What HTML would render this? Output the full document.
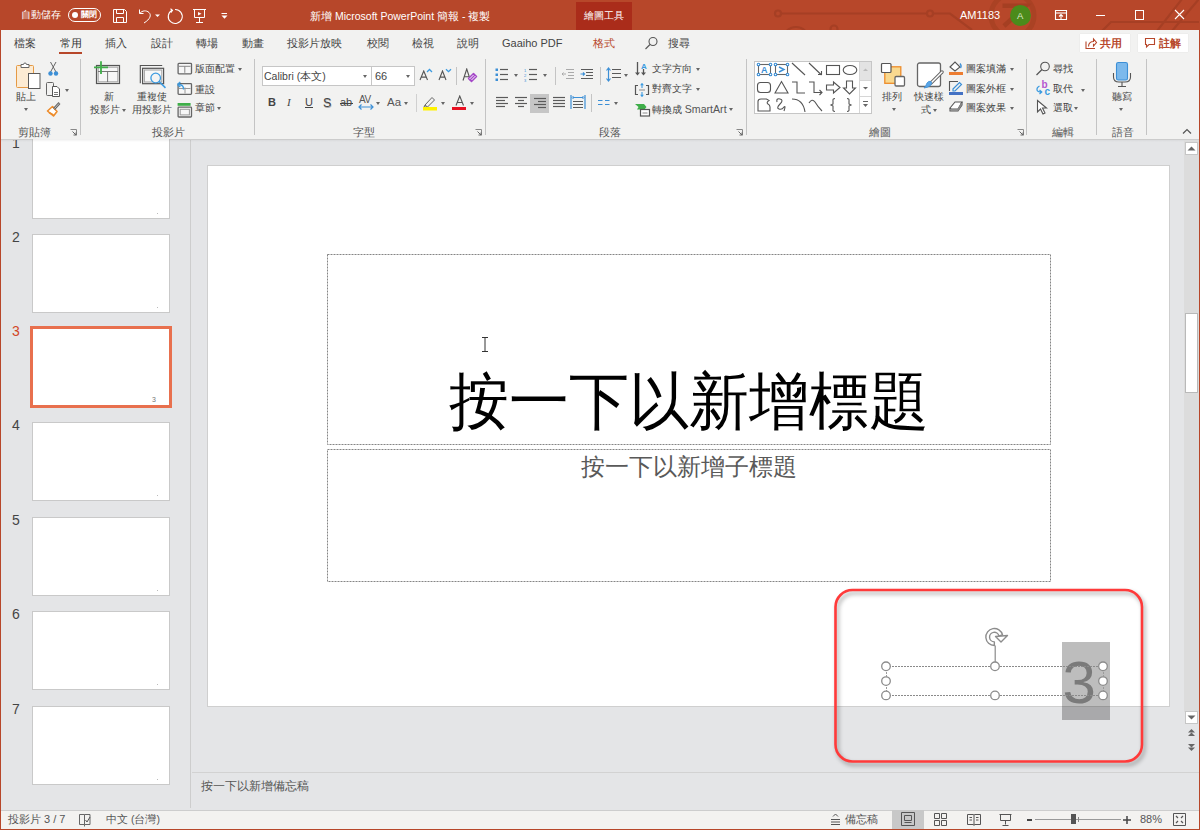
<!DOCTYPE html>
<html><head><meta charset="utf-8">
<style>
*{margin:0;padding:0;box-sizing:border-box}
html,body{width:1200px;height:830px;overflow:hidden;background:#E4E5E7;font-family:"Liberation Sans",sans-serif;color:#444}
.a{position:absolute}
.t{position:absolute;white-space:nowrap;line-height:1;font-size:10px;color:#444}
#title{left:0;top:0;width:1200px;height:30px;background:#B7472A}
#ribbon{left:0;top:30px;width:1200px;height:109px;background:#F2F2F1}
#rbot{left:0;top:139px;width:1200px;height:1px;background:#D9D9D9}
#pane{left:0;top:140px;width:190px;height:670px;background:#E4E5E7}
#split{left:190px;top:140px;width:1px;height:668px;background:#CDCDCD}
#slide{left:207px;top:165px;width:963px;height:541px;background:#fff;border:1px solid #D0D0D0}
#notesep{left:191px;top:771px;width:992px;height:1px;background:#D0D0D0}
#status{left:0;top:810px;width:1200px;height:20px;background:#F1F1F1;border-top:1px solid #D6D6D6}
#bl{left:0;top:0;width:1px;height:830px;background:#B7472A}
#br{left:1199px;top:0;width:1px;height:830px;background:#B7472A}
#bb{left:0;top:829px;width:1200px;height:1px;background:#B7472A}
.thumb{position:absolute;left:32px;width:138px;height:79px;background:#fff;border:1px solid #C9C9C9}
.num{position:absolute;left:12px;font-size:13px;color:#555}
.ph{position:absolute;border:1px dashed #8a8a8a}

.r{position:absolute;white-space:nowrap;line-height:1;font-size:10px;color:#444}
.dd{position:absolute;width:0;height:0;border-left:2.5px solid transparent;border-right:2.5px solid transparent;border-top:3px solid #666}
.sep{position:absolute;width:1px;background:#C4C4C4}
.lau{position:absolute;width:7px;height:6px}
</style></head><body>

<div id="title" class="a"></div>
<div id="ribbon" class="a"></div>
<div id="rbot" class="a"></div>
<div id="pane" class="a"></div>
<div id="split" class="a"></div>

<!-- title bar content -->
<svg class="a" style="left:0;top:0" width="1200" height="30">
 <g fill="none" stroke="#A63F24" stroke-width="2.2">
  <path d="M781 13.5H927"/><circle cx="778" cy="13.5" r="3"/><circle cx="930" cy="13.5" r="3"/>
  <path d="M933 13.5H950L972 30"/>
  <circle cx="796" cy="40" r="13"/><circle cx="834" cy="29" r="3.5"/>
  <circle cx="1012.5" cy="15.5" r="21.5" stroke-width="5" stroke="#AA4224"/>
  <path d="M1002.5 5.7H1026L1004 26" stroke-width="4.5" stroke="#A53F22"/>
  <path d="M1102 31L1111 22H1200M1157 31L1182 -1M1172 31L1199 -1"/>
 </g>
</svg>
<div class="t" style="left:21px;top:10px;color:#fff;font-size:10px">自動儲存</div>
<div class="a" style="left:68px;top:8px;width:33px;height:14px;border:1.3px solid #fff;border-radius:7px"></div>
<div class="a" style="left:71.5px;top:11.5px;width:6.5px;height:6.5px;border-radius:50%;background:#fff"></div>
<div class="t" style="left:80.5px;top:10.5px;color:#fff;font-size:7.5px;font-weight:bold">關閉</div>
<svg class="a" style="left:113px;top:9px" width="15" height="15" fill="none" stroke="#fff" stroke-width="1"><path d="M0.5 0.5H11.5L13.5 2.5V13.5H0.5Z"/><path d="M3.5 0.5V4.5H10.5V0.5"/><path d="M3.5 13.5V8.5H10.5V13.5"/></svg>
<svg class="a" style="left:138px;top:8px" width="24" height="16" fill="none" stroke="#fff" stroke-width="1"><path d="M1.5 1.5V5.5H5.5"/><path d="M1.8 5.3C4 2.5 8.5 2 11 4.5C13.5 7 12.5 11 6 15"/><path d="M17 6.5H22L19.5 9Z" fill="#fff" stroke="none"/></svg>
<svg class="a" style="left:166px;top:8px" width="18" height="17" fill="none" stroke="#fff" stroke-width="1.1"><path d="M6.2 2.2A7 7 0 1 0 9 1.5"/><path d="M4.5 0.8L6.5 2.3L4.8 4.6"/></svg>
<svg class="a" style="left:193px;top:9px" width="14" height="15" fill="none" stroke="#fff" stroke-width="1"><path d="M0 0.5H13"/><path d="M1.5 0.5V8.5H11.5V0.5"/><path d="M6.5 8.5V13.5M3 13.5H10"/><path d="M5 3L8.5 4.7L5 6.4Z" fill="#fff" stroke="none"/></svg>
<svg class="a" style="left:221px;top:13px" width="7" height="7"><path d="M0.5 0.5H6" stroke="#fff" stroke-width="1"/><path d="M0.5 2.5H6.5L3.5 5.8Z" fill="#fff"/></svg>
<div class="t" style="left:310px;top:11px;color:#fff;font-size:10.5px">新增 Microsoft PowerPoint 簡報 - 複製</div>
<div class="a" style="left:576px;top:2px;width:56px;height:28px;background:#AA2C1A"></div>
<div class="t" style="left:584px;top:11px;color:#fff;font-size:10.3px">繪圖工具</div>
<div class="t" style="left:960px;top:10px;color:#fff;font-size:11px">AM1183</div>
<div class="a" style="left:1010px;top:5px;width:21px;height:21px;border-radius:50%;background:#4B8B1B"></div>
<div class="t" style="left:1017px;top:11px;color:#DDE8CC;font-size:9.5px">A</div>
<svg class="a" style="left:1054px;top:9px" width="14" height="12" fill="none" stroke="#fff" stroke-width="1.1">
 <path d="M1.5 1.5H12.5V10.5H1.5Z"/><path d="M1.5 4H12.5"/><path d="M7 5.5V10M5 7.5L7 5.5L9 7.5"/>
</svg>
<div class="a" style="left:1096px;top:14.5px;width:9px;height:1px;background:#fff"></div>
<div class="a" style="left:1135px;top:10px;width:9px;height:9.5px;border:1.1px solid #fff"></div>
<svg class="a" style="left:1174px;top:9px" width="11" height="11" stroke="#fff" stroke-width="1.1"><path d="M1 1L10 10M10 1L1 10"/></svg>

<!-- tabs -->
<div class="t" style="left:14px;top:38px;font-size:11px">檔案</div>
<div class="t" style="left:60px;top:38px;font-size:11px;color:#333">常用</div>
<div class="a" style="left:59px;top:52px;width:23px;height:2px;background:#B7472A"></div>
<div class="t" style="left:105px;top:38px;font-size:11px">插入</div>
<div class="t" style="left:151px;top:38px;font-size:11px">設計</div>
<div class="t" style="left:196px;top:38px;font-size:11px">轉場</div>
<div class="t" style="left:242px;top:38px;font-size:11px">動畫</div>
<div class="t" style="left:287px;top:38px;font-size:11px">投影片放映</div>
<div class="t" style="left:367px;top:38px;font-size:11px">校閱</div>
<div class="t" style="left:412px;top:38px;font-size:11px">檢視</div>
<div class="t" style="left:457px;top:38px;font-size:11px">說明</div>
<div class="t" style="left:502px;top:38px;font-size:11px;font-size:11px">Gaaiho PDF</div>
<div class="t" style="left:593px;top:38px;font-size:11px;color:#B7472A">格式</div>
<svg class="a" style="left:644px;top:36px" width="15" height="14" fill="none" stroke="#555" stroke-width="1.1"><circle cx="9" cy="5.5" r="4"/><path d="M6 8.5L1.5 13"/></svg>
<div class="t" style="left:668px;top:38px;font-size:11px">搜尋</div>
<div class="a" style="left:1080px;top:34px;width:50px;height:18px;background:#fff;box-shadow:0 0 1px rgba(0,0,0,0.12)"></div>
<svg class="a" style="left:1085px;top:37px" width="13" height="13" fill="none" stroke="#B7472A" stroke-width="1.1"><path d="M1 4.5V11.5H10"/><path d="M3.5 9.5C3.5 6 6 4.5 8.5 4.5V2L11.5 5.5L8.5 9V6.8"/></svg>
<div class="t" style="left:1100px;top:38px;color:#B7472A;font-size:10.5px;font-weight:bold">共用</div>
<div class="a" style="left:1138px;top:34px;width:50px;height:18px;background:#fff;box-shadow:0 0 1px rgba(0,0,0,0.12)"></div>
<svg class="a" style="left:1144px;top:37px" width="12" height="12" fill="none" stroke="#B7472A" stroke-width="1.1"><path d="M1.5 1.5H10.5V7.5H5L2.5 10V7.5H1.5Z"/></svg>
<div class="t" style="left:1159px;top:38px;color:#B7472A;font-size:10.5px;font-weight:bold">註解</div>
<!-- ribbon -->
<div class="r" style="left:18px;top:127px;font-size:10.5px;color:#555">剪貼簿</div>
<div class="r" style="left:152px;top:127px;font-size:10.5px;color:#555">投影片</div>
<div class="r" style="left:353px;top:127px;font-size:10.5px;color:#555">字型</div>
<div class="r" style="left:599px;top:127px;font-size:10.5px;color:#555">段落</div>
<div class="r" style="left:869px;top:127px;font-size:10.5px;color:#555">繪圖</div>
<div class="r" style="left:1052px;top:127px;font-size:10.5px;color:#555">編輯</div>
<div class="r" style="left:1112px;top:127px;font-size:10.5px;color:#555">語音</div>
<svg class="a" style="left:70px;top:129px" width="8" height="8" fill="none" stroke="#5A5A5A" stroke-width="1" ><path d="M0.5 0.5H6.5V6.5" stroke="#888"/><path d="M2.5 2.5L6 6M3.5 6H6V3.5" stroke="#666"/></svg>
<svg class="a" style="left:475px;top:129px" width="8" height="8" fill="none" stroke="#5A5A5A" stroke-width="1" ><path d="M0.5 0.5H6.5V6.5" stroke="#888"/><path d="M2.5 2.5L6 6M3.5 6H6V3.5" stroke="#666"/></svg>
<svg class="a" style="left:736px;top:129px" width="8" height="8" fill="none" stroke="#5A5A5A" stroke-width="1" ><path d="M0.5 0.5H6.5V6.5" stroke="#888"/><path d="M2.5 2.5L6 6M3.5 6H6V3.5" stroke="#666"/></svg>
<svg class="a" style="left:1017px;top:129px" width="8" height="8" fill="none" stroke="#5A5A5A" stroke-width="1" ><path d="M0.5 0.5H6.5V6.5" stroke="#888"/><path d="M2.5 2.5L6 6M3.5 6H6V3.5" stroke="#666"/></svg>
<div class="sep" style="left:80px;top:59px;height:76px"></div>
<div class="sep" style="left:254px;top:59px;height:76px"></div>
<div class="sep" style="left:485px;top:59px;height:76px"></div>
<div class="sep" style="left:746px;top:59px;height:76px"></div>
<div class="sep" style="left:1026px;top:59px;height:76px"></div>
<div class="sep" style="left:1096px;top:59px;height:76px"></div>
<div class="sep" style="left:1146px;top:59px;height:76px"></div>
<svg class="a" style="left:15px;top:61px" width="27" height="29" fill="none" stroke="#5A5A5A" stroke-width="1" ><rect x="1.5" y="4.5" width="17" height="22" rx="1" fill="#FCEBD3" stroke="#E59A45"/>
<path d="M6 6.5V3.5H8.5A1.5 1.5 0 0 1 11.5 3.5H14V6.5Z" fill="#fff" stroke="#666"/>
<rect x="13.5" y="12.5" width="11.5" height="15" fill="#fff" stroke="#5A5A5A"/></svg>
<div class="r" style="left:16px;top:92px;font-size:10px;">貼上</div>
<div class="dd" style="left:24px;top:108px"></div>
<svg class="a" style="left:47px;top:61px" width="12" height="16" fill="none" stroke="#5A5A5A" stroke-width="1"><path d="M3.5 1L9 11M9 1L3.5 11" stroke="#666"/><circle cx="3.5" cy="12.5" r="2.2" fill="#3C8FD6" stroke="none"/><circle cx="9" cy="12.5" r="2.2" fill="#3C8FD6" stroke="none"/></svg>
<svg class="a" style="left:45px;top:81px" width="16" height="16" fill="none" stroke="#5A5A5A" stroke-width="1"><path d="M7 14.5H2.5Q1.5 14.5 1.5 13.5V2.5Q1.5 1.5 2.5 1.5H7.5Q8.5 1.5 8.5 2.5V5" stroke="#666"/><path d="M7.5 5.5H12L14.5 8V15.5H7.5Z" fill="#fff" stroke="#555"/><path d="M9 11.5H13M9 13.5H13" stroke="#777"/></svg>
<div class="dd" style="left:65px;top:89px"></div>
<svg class="a" style="left:46px;top:101px" width="15" height="17" fill="none" stroke="#5A5A5A" stroke-width="1"><path d="M1.5 10L6.5 5.5L11 10.5L7.5 15Z" fill="#fff" stroke="#ED8C2B" stroke-width="1.6" stroke-linejoin="round"/><path d="M3 11.5L7.5 14" stroke="#ED8C2B" stroke-width="1.5"/><path d="M8 8L13.5 2" stroke="#666" stroke-width="2.6"/><path d="M8.5 7.5L13 2.5" stroke="#ddd" stroke-width="0.8"/></svg>
<svg class="a" style="left:93px;top:60px" width="29" height="26" fill="none"><rect x="3.5" y="5.5" width="23" height="18" stroke="#555" stroke-width="1.2"/><rect x="5.2" y="7.2" width="19.6" height="14.6" fill="#F7F7F7" stroke="#A8A8A8" stroke-width="1.1"/><path d="M5 11.5H25M14.6 11.5V22" stroke="#777"/><path d="M1 7.3H15M8 1.3V13.9" stroke="#3FAE49" stroke-width="1.8"/></svg>
<div class="r" style="left:104px;top:92px;font-size:10px;">新</div>
<div class="r" style="left:90px;top:105px;font-size:10px;">投影片</div>
<div class="dd" style="left:122px;top:109px"></div>
<svg class="a" style="left:139px;top:64px" width="28" height="26" fill="none"><path d="M1.3 19.2V1.5H23.2" stroke="#555" stroke-width="1.1"/><rect x="3.6" y="4.3" width="21" height="15.4" fill="#F7F7F7" stroke="#555" stroke-width="1.2"/><rect x="5.4" y="6" width="17.4" height="12" stroke="#A8A8A8" stroke-width="1.1"/><circle cx="16.7" cy="14" r="4.8" fill="#F4F4F4" stroke="#3C9BE0" stroke-width="1.3"/><path d="M20.1 17.5L26.5 23.9" stroke="#3C9BE0" stroke-width="1.5"/></svg>
<div class="r" style="left:137px;top:92px;font-size:10px;">重複使</div>
<div class="r" style="left:132px;top:105px;font-size:10px;">用投影片</div>
<svg class="a" style="left:176px;top:61px" width="17" height="14" fill="none"><rect x="2.1" y="2.4" width="13.4" height="10.4" rx="0.8" fill="#F7F7F7" stroke="#666" stroke-width="1.3"/><path d="M3 5.3H14.5" stroke="#888" stroke-width="1"/><path d="M8.8 5.3V11.8" stroke="#888"/></svg>
<div class="r" style="left:195px;top:64px;font-size:10px;">版面配置</div>
<div class="dd" style="left:238px;top:68px"></div>
<svg class="a" style="left:176px;top:80px" width="17" height="16" fill="none"><rect x="2.1" y="3.7" width="13.4" height="10.6" rx="0.8" fill="#F7F7F7" stroke="#666" stroke-width="1.3"/><path d="M9 7.5V13.5M3 8.5H14.5" stroke="#999"/><path d="M7.5 9.5Q8 5 3 4.5" stroke="#3C9BE0" stroke-width="1.4"/><path d="M1.5 4.5L4.3 2M1.5 4.5L4.3 7" stroke="#3C9BE0" stroke-width="1.4"/></svg>
<div class="r" style="left:195px;top:85px;font-size:10px;">重設</div>
<svg class="a" style="left:176px;top:101px" width="17" height="17" fill="none"><rect x="1.6" y="2" width="13" height="2.8" fill="#3FAE49"/><rect x="2.1" y="6.2" width="13.4" height="9.8" rx="0.8" fill="#F7F7F7" stroke="#666" stroke-width="1.3"/><rect x="4.2" y="8.3" width="9.2" height="5.6" stroke="#999"/></svg>
<div class="r" style="left:195px;top:103px;font-size:10px;">章節</div>
<div class="dd" style="left:217px;top:107px"></div>
<div class="a" style="left:262px;top:66px;width:110px;height:20px;background:#fff;border:1px solid #C6C6C6"></div>
<div class="a" style="left:371px;top:66px;width:44px;height:20px;background:#fff;border:1px solid #C6C6C6"></div>
<div class="r" style="left:264px;top:71px;font-size:10.5px;color:#454545">Calibri (本文)</div>
<div class="dd" style="left:363px;top:75px"></div>
<div class="r" style="left:375px;top:71px;font-size:11px;color:#454545">66</div>
<div class="dd" style="left:406px;top:75px"></div>
<svg class="a" style="left:419px;top:70px" width="9.5" height="11" fill="none" stroke="#555" stroke-width="1.1"><path d="M1 10L4.75 1L8.5 10M2.5 7.12H7.0"/></svg>
<svg class="a" style="left:426px;top:68px" width="7" height="5" fill="none"><path d="M1 4L3.5 1.5L6 4" stroke="#3C9BE0" stroke-width="1.3"/></svg>
<svg class="a" style="left:438px;top:70px" width="9" height="11" fill="none" stroke="#555" stroke-width="1.1"><path d="M1 10L4.5 1L8 10M2.4000000000000004 7.12H6.6000000000000005"/></svg>
<svg class="a" style="left:445px;top:68px" width="7" height="5" fill="none"><path d="M1 1.2L3.5 3.7L6 1.2" stroke="#3C9BE0" stroke-width="1.3"/></svg>
<div class="sep" style="left:456px;top:67px;height:18px"></div>
<svg class="a" style="left:461.5px;top:67.5px" width="9.5" height="13.5" fill="none" stroke="#555" stroke-width="1.1"><path d="M1 12.5L4.75 1L8.5 12.5M2.5 8.82H7.0"/></svg>
<svg class="a" style="left:467px;top:72px" width="11" height="11" fill="none"><path d="M1.5 6.5L6.5 1.5L9.5 4.5L4.5 9.5Z" fill="#fff" stroke="#A548C8" stroke-width="1.5" stroke-linejoin="round"/><path d="M3 8L8 3" stroke="#A548C8" stroke-width="1.5"/></svg>
<div class="r" style="left:268px;top:97px;font-size:11px;font-weight:bold;color:#444">B</div>
<div class="r" style="left:287px;top:97px;font-size:11px;font-style:italic;font-family:Liberation Serif;color:#444">I</div>
<div class="r" style="left:305px;top:97px;font-size:11px;color:#444">U</div>
<div class="a" style="left:305px;top:107px;width:8px;height:1px;background:#444"></div>
<div class="r" style="left:323px;top:96.5px;font-size:12.5px;color:#444;text-shadow:0.5px 0.5px 0 #aaa">S</div>
<div class="r" style="left:340px;top:97px;font-size:11px;color:#444">ab</div>
<div class="a" style="left:340px;top:103px;width:13px;height:1px;background:#444"></div>
<div class="r" style="left:359px;top:95px;font-size:10px;color:#555;letter-spacing:-0.5px">AV</div>
<svg class="a" style="left:358px;top:104px" width="16" height="6" fill="none" stroke="#5A5A5A" stroke-width="1" ><path d="M1 3H15M3.5 0.5L1 3L3.5 5.5M12.5 0.5L15 3L12.5 5.5" stroke="#3C8FD6" stroke-width="1.2"/></svg>
<div class="dd" style="left:376px;top:102px"></div>
<div class="r" style="left:387px;top:97px;font-size:11.5px;color:#555">Aa</div>
<div class="dd" style="left:404px;top:102px"></div>
<div class="sep" style="left:416px;top:94px;height:18px;background:#D0D0D0"></div>
<svg class="a" style="left:422px;top:95px" width="16" height="16" fill="none" stroke="#5A5A5A" stroke-width="1" ><path d="M3 10L10 2.5L12.5 5L5.5 12Z" stroke="#666"/><path d="M3 10L2 12H5.5" stroke="#666"/><rect x="1" y="12" width="14" height="3.5" fill="#FFF200" stroke="none"/></svg>
<div class="dd" style="left:441px;top:102px"></div>
<svg class="a" style="left:454.5px;top:95px" width="9.5" height="11.5" fill="none" stroke="#555" stroke-width="1.1"><path d="M1 10.5L4.75 1L8.5 10.5M2.5 7.460000000000001H7.0"/></svg>
<div class="a" style="left:452px;top:107px;width:14px;height:3px;background:#E81123"></div>
<div class="dd" style="left:470px;top:102px"></div>
<svg class="a" style="left:495px;top:68px" width="14" height="14" fill="none" stroke="#5A5A5A" stroke-width="1" ><rect x="0.5" y="0.5" width="2.5" height="2.5" fill="#3C8FD6" stroke="none"/><path d="M5 1.5H13" stroke="#5A5A5A" stroke-width="1.2"/><rect x="0.5" y="5.5" width="2.5" height="2.5" fill="#3C8FD6" stroke="none"/><path d="M5 6.5H13" stroke="#5A5A5A" stroke-width="1.2"/><rect x="0.5" y="10.5" width="2.5" height="2.5" fill="#3C8FD6" stroke="none"/><path d="M5 11.5H13" stroke="#5A5A5A" stroke-width="1.2"/></svg>
<div class="dd" style="left:514px;top:74px"></div>
<svg class="a" style="left:524px;top:68px" width="14" height="14" fill="none" stroke="#5A5A5A" stroke-width="1" ><text x="0" y="4.0" font-size="4" fill="#3C8FD6" stroke="none" font-family="Liberation Sans">1</text><path d="M5 1.5H13" stroke="#5A5A5A" stroke-width="1.2"/><text x="0" y="9.0" font-size="4" fill="#3C8FD6" stroke="none" font-family="Liberation Sans">2</text><path d="M5 6.5H13" stroke="#5A5A5A" stroke-width="1.2"/><text x="0" y="14.0" font-size="4" fill="#3C8FD6" stroke="none" font-family="Liberation Sans">3</text><path d="M5 11.5H13" stroke="#5A5A5A" stroke-width="1.2"/></svg>
<div class="dd" style="left:543px;top:74px"></div>
<div class="sep" style="left:555px;top:67px;height:18px"></div>
<svg class="a" style="left:561px;top:68px" width="14" height="13" fill="none" stroke="#5A5A5A" stroke-width="1" ><path d="M5 1.5H13M7 4.5H13M7 7.5H13M5 10.5H13" stroke="#AAA" stroke-width="1.2"/><path d="M5 6H1M2.5 4.5L1 6L2.5 7.5" stroke="#AAA"/></svg>
<svg class="a" style="left:580px;top:68px" width="14" height="13" fill="none" stroke="#5A5A5A" stroke-width="1" ><path d="M1 1.5H13M6 4.5H13M6 7.5H13M1 10.5H13" stroke="#5A5A5A" stroke-width="1.2"/><path d="M0.5 6H4.5M3 4.5L4.5 6L3 7.5" stroke="#3C8FD6" stroke-width="1.2"/></svg>
<div class="sep" style="left:600px;top:67px;height:18px"></div>
<svg class="a" style="left:606px;top:67px" width="16" height="16" fill="none" stroke="#5A5A5A" stroke-width="1" ><path d="M6 2.5H15M6 6.5H15M6 10.5H15" stroke="#5A5A5A" stroke-width="1.2"/><path d="M2.5 1V14M0.5 3.5L2.5 1L4.5 3.5M0.5 11.5L2.5 14L4.5 11.5" stroke="#3C8FD6" stroke-width="1.2"/></svg>
<div class="dd" style="left:624px;top:74px"></div>
<div class="a" style="left:530px;top:94px;width:19px;height:19px;background:#C6C6C6"></div>
<svg class="a" style="left:496px;top:96px" width="13" height="12" fill="none" stroke="#5A5A5A" stroke-width="1" ><path d="M0 1.5H12" stroke="#5A5A5A" stroke-width="1.2"/><path d="M0 4.5H9" stroke="#5A5A5A" stroke-width="1.2"/><path d="M0 7.5H12" stroke="#5A5A5A" stroke-width="1.2"/><path d="M0 10.5H9" stroke="#5A5A5A" stroke-width="1.2"/></svg>
<svg class="a" style="left:515px;top:96px" width="13" height="12" fill="none" stroke="#5A5A5A" stroke-width="1" ><path d="M0 1.5H12" stroke="#5A5A5A" stroke-width="1.2"/><path d="M3 4.5H9" stroke="#5A5A5A" stroke-width="1.2"/><path d="M0 7.5H12" stroke="#5A5A5A" stroke-width="1.2"/><path d="M3 10.5H9" stroke="#5A5A5A" stroke-width="1.2"/></svg>
<svg class="a" style="left:534px;top:97px" width="13" height="12" fill="none" stroke="#5A5A5A" stroke-width="1" ><path d="M0 1.5H12" stroke="#5A5A5A" stroke-width="1.2"/><path d="M4 4.5H12" stroke="#5A5A5A" stroke-width="1.2"/><path d="M0 7.5H12" stroke="#5A5A5A" stroke-width="1.2"/><path d="M4 10.5H12" stroke="#5A5A5A" stroke-width="1.2"/></svg>
<svg class="a" style="left:553px;top:96px" width="13" height="12" fill="none" stroke="#5A5A5A" stroke-width="1" ><path d="M0 1.5H12" stroke="#5A5A5A" stroke-width="1.2"/><path d="M0 4.5H12" stroke="#5A5A5A" stroke-width="1.2"/><path d="M0 7.5H12" stroke="#5A5A5A" stroke-width="1.2"/><path d="M0 10.5H12" stroke="#5A5A5A" stroke-width="1.2"/></svg>
<svg class="a" style="left:570px;top:94px" width="16" height="16" fill="none" stroke="#5A5A5A" stroke-width="1" ><path d="M1 1V15M15 1V15" stroke="#3C8FD6" stroke-width="1.2"/><path d="M3 3.5H13M3.5 2L2 3.5L3.5 5M12.5 2L14 3.5L12.5 5" stroke="#3C8FD6"/><path d="M3 7.5H13M3 10.5H13M3 13.5H13" stroke="#5A5A5A" stroke-width="1.2"/></svg>
<div class="sep" style="left:591px;top:94px;height:18px"></div>
<svg class="a" style="left:598px;top:99px" width="12" height="8" fill="none" stroke="#5A5A5A" stroke-width="1" ><path d="M0 1.5H4.5M7 1.5H11.5M0 5.5H4.5M7 5.5H11.5" stroke="#3C8FD6" stroke-width="1.2"/></svg>
<div class="dd" style="left:614px;top:102px"></div>
<svg class="a" style="left:635px;top:61px" width="15" height="16" fill="none"><path d="M2.5 1V12M8.5 8V12" stroke="#555" stroke-width="1.3"/><path d="M0 11.5L2.5 14.5L5 11.5ZM6 11.5L8.5 14.5L11 11.5Z" fill="#555"/><text x="6" y="7.5" font-size="8" font-weight="bold" fill="#3C9BE0" font-family="Liberation Sans">A</text></svg>
<div class="r" style="left:652px;top:64px;font-size:10px;">文字方向</div>
<div class="dd" style="left:696px;top:68px"></div>
<svg class="a" style="left:634px;top:82px" width="16" height="16" fill="none"><path d="M4 3.5H1.5V12.5H4M12 3.5H14.5V12.5H12" stroke="#555" stroke-width="1.2"/><path d="M5 8H11" stroke="#888"/><path d="M8 1.5V6M8 10V14.5" stroke="#3C9BE0" stroke-width="1.1"/><path d="M6 3.3L8 1L10 3.3ZM6 12.7L8 15L10 12.7Z" fill="#3C9BE0"/></svg>
<div class="r" style="left:652px;top:84px;font-size:10px;">對齊文字</div>
<div class="dd" style="left:696px;top:88px"></div>
<svg class="a" style="left:634px;top:102px" width="17" height="15" fill="none"><path d="M1 2H10L12.5 5L10.5 7.5H3L4.5 5Z" fill="#3FAE49"/><rect x="6.5" y="7.5" width="9" height="6.5" fill="#fff" stroke="#555" stroke-width="1.2"/><path d="M8.5 11H13.5" stroke="#888"/></svg>
<div class="r" style="left:652px;top:104px;font-size:10px">轉換成 <span style="font-size:10.6px;color:#555">SmartArt</span></div>
<div class="dd" style="left:729px;top:108px"></div>
<div class="a" style="left:754px;top:61px;width:118px;height:53px;background:#fff;border:1px solid #C6C6C6"></div>
<div class="a" style="left:860px;top:62px;width:11px;height:18px;background:#E3E3E3"></div>
<div class="a" style="left:860px;top:80px;width:11px;height:1px;background:#D6D6D6"></div>
<div class="a" style="left:860px;top:96px;width:11px;height:1px;background:#D6D6D6"></div>
<div class="a" style="left:859px;top:62px;width:1px;height:51px;background:#D6D6D6"></div>
<svg class="a" style="left:862px;top:67px" width="7" height="5" fill="none" stroke="#5A5A5A" stroke-width="1" ><path d="M1 4L3.5 1.5L6 4Z" fill="#BBB" stroke="none"/></svg>
<svg class="a" style="left:862px;top:86px" width="7" height="5" fill="none" stroke="#5A5A5A" stroke-width="1" ><path d="M1 1H6L3.5 3.5Z" fill="#666" stroke="none"/></svg>
<svg class="a" style="left:862px;top:100px" width="7" height="9" fill="none" stroke="#5A5A5A" stroke-width="1" ><path d="M1 1.5H6" stroke="#666"/><path d="M1 4H6L3.5 7Z" fill="#666" stroke="none"/></svg>
<svg class="a" style="left:755px;top:61px" width="106" height="52" fill="none" stroke="#5A5A5A" stroke-width="1" ><g stroke="#555" stroke-width="1.1">
<rect x="3.5" y="3.5" width="12" height="10" stroke="#666"/><text x="6" y="12" font-size="9" font-weight="bold" fill="#3C8FD6" stroke="none" font-family="Liberation Sans">A</text>
<g fill="#fff" stroke="#3C8FD6"><circle cx="3.5" cy="3.5" r="1.3"/><circle cx="15.5" cy="3.5" r="1.3"/><circle cx="3.5" cy="13.5" r="1.3"/><circle cx="15.5" cy="13.5" r="1.3"/></g>
<rect x="20.5" y="3.5" width="12" height="10" stroke="#666"/><path d="M24 6L29 8.5L24 11" stroke="#3C8FD6" stroke-width="1.4"/>
<g fill="#fff" stroke="#3C8FD6"><circle cx="20.5" cy="3.5" r="1.3"/><circle cx="32.5" cy="3.5" r="1.3"/><circle cx="20.5" cy="13.5" r="1.3"/><circle cx="32.5" cy="13.5" r="1.3"/></g>
<path d="M37 2L50 14"/><path d="M54 2L66.5 14M63 13.5H66.5V10"/>
<rect x="71.5" y="4.5" width="13" height="9"/><ellipse cx="95" cy="9" rx="6.8" ry="4.5"/>
<rect x="2.5" y="21.5" width="13" height="10" rx="3"/><path d="M20 32L26.5 20.5L33 32Z"/>
<path d="M37 21H42V32H50"/><path d="M54 21H59V31.5H67M64.5 29L67 31.5L64.5 34"/>
<path d="M71.5 24H78.5V21L85 26.5L78.5 32V29H71.5Z"/><path d="M91.5 20V27H88.5L94.5 33L100.5 27H97.5V20Z"/>
<path d="M3 40.5Q3 38 6 38H11.5L14 39.5Q11 41.5 13 43Q15 44 15 46V50H3Z"/><path d="M22 41Q21 37 25 38Q29 39 25 43Q21 47 24 48Q27 49 29 46Q31 44 29 50"/>
<path d="M37 38Q48 38 50 51"/><path d="M54 42Q57 37 60 41Q63 46 67 50"/>
<path d="M80 37.5Q77.5 37.5 78 40V43L76 44L78 45V48Q77.5 50.5 80 50.5"/><path d="M92 37.5Q94.5 37.5 94 40V43L96 44L94 45V48Q94.5 50.5 92 50.5"/>
</g></svg>
<svg class="a" style="left:879px;top:61px" width="28" height="28" fill="none"><rect x="5.8" y="5.8" width="16" height="16.5" fill="#F9D98F" stroke="#ED8C2B" stroke-width="1.3"/><rect x="2.5" y="2.5" width="9.5" height="9" rx="1" fill="#fff" stroke="#555" stroke-width="1.2"/><rect x="16" y="15.5" width="9.5" height="9.5" rx="1.2" fill="#fff" stroke="#666" stroke-width="1.3"/></svg>
<div class="r" style="left:882px;top:92px;font-size:10px;">排列</div>
<div class="dd" style="left:892px;top:108px"></div>
<svg class="a" style="left:915px;top:61px" width="29" height="29" fill="none"><rect x="2.5" y="2" width="23" height="23.5" rx="2" fill="#fff" stroke="#666" stroke-width="1.3"/><path d="M27 11L16 22" stroke="#666" stroke-width="3.4" stroke-linecap="round"/><path d="M27 11L16 22" stroke="#fff" stroke-width="1.4" stroke-linecap="round"/><path d="M9 27Q13 26.5 15.5 24.5Q17.5 22 16 20.5Q13.5 19.5 12 22Q11 25 9 27Z" fill="#5AA5E6" stroke="#3C8FD6" stroke-width="0.8"/></svg>
<div class="r" style="left:914px;top:92px;font-size:10px;">快速樣</div>
<div class="r" style="left:921px;top:105px;font-size:10px;">式</div>
<div class="dd" style="left:933px;top:109px"></div>
<svg class="a" style="left:948px;top:60px" width="16" height="16" fill="none" stroke="#5A5A5A" stroke-width="1" ><path d="M2 7L7 2L12 7L7 11Z" fill="#fff" stroke="#555" stroke-width="1.1"/><path d="M12 3.5Q14 6 12.5 8" stroke="#3C8FD6" stroke-width="1.3"/><rect x="1" y="12" width="14" height="3" fill="#ED7D31" stroke="none"/></svg>
<div class="r" style="left:966px;top:64px;font-size:10px;">圖案填滿</div>
<div class="dd" style="left:1010px;top:68px"></div>
<svg class="a" style="left:948px;top:80px" width="16" height="16" fill="none" stroke="#5A5A5A" stroke-width="1" ><path d="M1.5 11V1.5H10" stroke="#555" stroke-width="1.1"/><path d="M5 9L11.5 2.5L13.5 4.5L7 11H5Z" stroke="#3C8FD6" stroke-width="1.2"/><rect x="1" y="12" width="14" height="3" fill="#4472C4" stroke="none"/></svg>
<div class="r" style="left:966px;top:84px;font-size:10px;">圖案外框</div>
<div class="dd" style="left:1010px;top:88px"></div>
<svg class="a" style="left:948px;top:100px" width="16" height="14" fill="none" stroke="#5A5A5A" stroke-width="1" ><path d="M2 8L7 2H14L10 9H3Z" fill="#fff" stroke="#555" stroke-width="1.1"/><path d="M2 8V11H10L14 5V2" stroke="#555" stroke-width="1.1"/><path d="M3 10H10L13 5V3" stroke="#888" stroke-width="1.6"/></svg>
<div class="r" style="left:966px;top:103px;font-size:10px;">圖案效果</div>
<div class="dd" style="left:1010px;top:107px"></div>
<svg class="a" style="left:1035px;top:61px" width="16" height="15" fill="none" stroke="#5A5A5A" stroke-width="1" ><circle cx="10" cy="5.5" r="4.3" stroke="#555" stroke-width="1.1"/><path d="M7 8.5L1.5 14" stroke="#555" stroke-width="1.3"/></svg>
<div class="r" style="left:1053px;top:64px;font-size:10px;">尋找</div>
<svg class="a" style="left:1035px;top:79px" width="17" height="17" fill="none"><text x="6.5" y="8.5" font-size="10" font-weight="bold" fill="#B455D0" font-family="Liberation Sans">b</text><text x="9.5" y="16" font-size="10" font-weight="bold" fill="#3C9BE0" font-family="Liberation Sans">c</text><path d="M4.5 7Q1.5 8.5 2 11Q2.5 13 6.5 13M4.5 11L6.8 13L4.5 15" stroke="#3C9BE0" stroke-width="1.2"/></svg>
<div class="r" style="left:1053px;top:84px;font-size:10px;">取代</div>
<div class="dd" style="left:1081px;top:89px"></div>
<svg class="a" style="left:1036px;top:99px" width="12" height="16" fill="none" stroke="#5A5A5A" stroke-width="1" ><path d="M1.5 1.5V13L4.5 10L7 15L9 14L6.5 9H10.5Z" fill="#fff" stroke="#555" stroke-width="1.1"/></svg>
<div class="r" style="left:1053px;top:103px;font-size:10px;">選取</div>
<div class="dd" style="left:1074px;top:107px"></div>
<svg class="a" style="left:1111px;top:61px" width="22" height="27" fill="none"><rect x="5.5" y="1.5" width="11" height="17.5" rx="1.8" fill="#7CB9EC" stroke="#3C8FD6" stroke-width="1.1"/><path d="M2.5 12V16Q2.5 21 8 21H14Q19.5 21 19.5 16V12M11 21V25M7 25.5H15" stroke="#555" stroke-width="1.1"/></svg>
<div class="r" style="left:1112px;top:92px;font-size:10px;">聽寫</div>
<div class="dd" style="left:1119px;top:108px"></div>
<svg class="a" style="left:1182px;top:128px" width="10" height="7" fill="none" stroke="#5A5A5A" stroke-width="1" ><path d="M1 5.5L5 1.5L9 5.5" stroke="#555" stroke-width="1.2"/></svg>
<!-- main -->
<div class="thumb" style="top:139px;height:80px;border-top:none"></div>
<div class="a" style="left:157px;top:213px;width:1px;height:1px;background:#bbb"></div>
<div class="t" style="left:12px;top:136px;font-size:14px;color:#444;clip-path:inset(4px 0 0 0)">1</div>
<div class="thumb" style="top:234px"></div>
<div class="a" style="left:157px;top:307px;width:1px;height:1px;background:#bbb"></div>
<div class="t" style="left:12px;top:230px;font-size:14px;color:#444">2</div>
<div class="a" style="left:30px;top:326px;width:142px;height:82px;background:#fff;border:3px solid #E8704E"></div>
<div class="t" style="left:152px;top:396px;font-size:7px;color:#777">3</div>
<div class="t" style="left:12px;top:324px;font-size:14px;color:#D24726">3</div>
<div class="thumb" style="top:422px"></div>
<div class="a" style="left:157px;top:495px;width:1px;height:1px;background:#bbb"></div>
<div class="t" style="left:12px;top:418px;font-size:14px;color:#444">4</div>
<div class="thumb" style="top:517px"></div>
<div class="a" style="left:157px;top:590px;width:1px;height:1px;background:#bbb"></div>
<div class="t" style="left:12px;top:513px;font-size:14px;color:#444">5</div>
<div class="thumb" style="top:611px"></div>
<div class="a" style="left:157px;top:684px;width:1px;height:1px;background:#bbb"></div>
<div class="t" style="left:12px;top:607px;font-size:14px;color:#444">6</div>
<div class="thumb" style="top:706px"></div>
<div class="a" style="left:157px;top:779px;width:1px;height:1px;background:#bbb"></div>
<div class="t" style="left:12px;top:702px;font-size:14px;color:#444">7</div>
<div class="a" style="left:1px;top:139px;width:1198px;height:3px;background:linear-gradient(rgba(0,0,0,0.07),rgba(0,0,0,0))"></div>
<div class="a" style="left:207px;top:165px;width:963px;height:542px;background:#fff;border:1px solid #CFCFCF"></div>
<svg class="a" style="left:327px;top:254px" width="725" height="191" fill="none"><rect x="0.5" y="0.5" width="723" height="190" stroke="#858585" stroke-dasharray="2 1"/></svg>
<svg class="a" style="left:327px;top:449px" width="725" height="134" fill="none"><rect x="0.5" y="0.5" width="723" height="132" stroke="#858585" stroke-dasharray="2 1"/></svg>
<div class="t" style="left:449px;top:371px;font-size:60px;color:#000;transform:scaleY(1.05);transform-origin:0 0;font-family:'Liberation Serif',serif">按一下以新增標題</div>
<div class="t" style="left:581px;top:455px;font-size:24px;color:#595959;font-family:'Liberation Serif',serif">按一下以新增子標題</div>
<svg class="a" style="left:481px;top:337px" width="8" height="16" stroke="#333" stroke-width="1" fill="none"><path d="M1 0.5H7M1 14.5H7M4 0.5V14.5"/></svg>
<div class="a" style="left:1062px;top:642px;width:48px;height:78px;background:rgba(0,0,0,0.26)"></div>
<div class="t" style="left:1062.5px;top:652.5px;font-size:60px;color:#7A7A7A">3</div>
<svg class="a" style="left:870px;top:620px" width="250" height="90" fill="none">
<path d="M16 46.5H233M16 75.5H233" stroke="#8A8A8A" stroke-width="1" stroke-dasharray="2 1"/>
<path d="M16.5 46V75M233.5 46V75" stroke="#9A9A9A" stroke-width="1" stroke-dasharray="2 1"/>
<path d="M125.2 25.5V42" stroke="#8A8A8A" stroke-width="1.2"/>
<g fill="#fff" stroke="#8C8C8C" stroke-width="1.3">
<circle cx="16" cy="46.3" r="4.3"/><circle cx="125" cy="46.3" r="4.3"/><circle cx="233" cy="46.3" r="4.3"/>
<circle cx="16" cy="61.1" r="4.3"/><circle cx="233" cy="61.1" r="4.3"/>
<circle cx="16" cy="75.4" r="4.3"/><circle cx="125" cy="75.4" r="4.3"/><circle cx="233" cy="75.4" r="4.3"/>
</g>
<path d="M124.35 25.55A8.5 8.5 0 1 1 132.56 14.85L128.99 15.81A4.8 4.8 0 1 0 124.35 21.85Z" fill="#fff" stroke="#8C8C8C" stroke-width="1.4" stroke-linejoin="round"/>
<path d="M125.5 16.5L137.5 15.5L131 22Z" fill="#fff" stroke="#8C8C8C" stroke-width="1.4" stroke-linejoin="round"/>
</svg>
<svg class="a" style="left:825px;top:580px;filter:drop-shadow(2px 3px 2px rgba(0,0,0,0.35))" width="330" height="195" fill="none"><rect x="10.5" y="10" width="306.5" height="171.5" rx="17" stroke="#FF3A3A" stroke-width="2.6"/></svg>
<div class="a" style="left:1184px;top:140px;width:15px;height:572px;background:#DCDCDC"></div>
<div class="a" style="left:1185px;top:142px;width:13px;height:13px;background:#fff;border:1px solid #C6C6C6"></div>
<svg class="a" style="left:1187px;top:146px" width="9" height="5"><path d="M0.5 4.5L4.5 0.5L8.5 4.5Z" fill="#666"/></svg>
<div class="a" style="left:1185px;top:313px;width:13px;height:80px;background:#fff;border:1px solid #B9B9B9"></div>
<div class="a" style="left:1185px;top:711px;width:13px;height:13px;background:#fff;border:1px solid #C6C6C6"></div>
<svg class="a" style="left:1187px;top:715px" width="9" height="5"><path d="M0.5 0.5H8.5L4.5 4.5Z" fill="#666"/></svg>
<svg class="a" style="left:1188px;top:729px" width="7" height="24" fill="#666"><path d="M0 3.5L3.5 0L7 3.5Z"/><path d="M0 7L3.5 3.5L7 7Z"/><path d="M0 15H7L3.5 18.5Z"/><path d="M0 18.5H7L3.5 22Z"/></svg>
<div class="a" style="left:192px;top:772px;width:1007px;height:1px;background:#D2D2D2"></div>
<div class="t" style="left:201px;top:781px;font-size:11.5px;color:#555">按一下以新增備忘稿</div>
<div class="a" style="left:0;top:810px;width:1200px;height:20px;background:#F3F2F0;border-top:1px solid #CDCDCD"></div>
<div class="t" style="left:8px;top:814px;font-size:11px;color:#555">投影片 3 / 7</div>
<svg class="a" style="left:78px;top:813px" width="14" height="14" fill="none" stroke="#666" stroke-width="1"><path d="M1.5 1.5H6.5V11.5H1.5ZM6.5 1.5H12V11.5H6.5"/><path d="M7.5 7L9 9L12 4" stroke="#555"/><path d="M6.5 11.5V13.5" /></svg>
<div class="t" style="left:106px;top:814px;font-size:10.5px;color:#555">中文 (台灣)</div>
<svg class="a" style="left:830px;top:813px" width="11" height="12" fill="none" stroke="#555"><path d="M3 3.5L5.5 1L8 3.5M1 6.5H10M1 9H10M1 11.5H10"/></svg>
<div class="t" style="left:845px;top:814px;font-size:10.5px;color:#555">備忘稿</div>
<div class="a" style="left:892px;top:810px;width:32px;height:19px;background:#C8C8C8"></div>
<svg class="a" style="left:901px;top:812px" width="14" height="14" fill="none" stroke="#555"><path d="M0.5 0.5H13.5V13.5H0.5Z"/><path d="M3.5 3.5H10.5V8.5H3.5ZM3.5 10.5H10.5"/></svg>
<svg class="a" style="left:934px;top:813px" width="13" height="13" fill="none" stroke="#555"><path d="M0.5 0.5H5.5V5.5H0.5ZM7.5 0.5H12.5V5.5H7.5ZM0.5 7.5H5.5V12.5H0.5ZM7.5 7.5H12.5V12.5H7.5Z"/></svg>
<svg class="a" style="left:967px;top:813px" width="14" height="13" fill="none" stroke="#555"><path d="M0.5 1.5H6.5L7 2.5L7.5 1.5H13.5V11.5H7.5L7 12.5L6.5 11.5H0.5Z"/><path d="M7 2.5V11.5M2.5 4.5H5M2.5 7H5M9 4.5H11.5M9 7H11.5"/></svg>
<svg class="a" style="left:999px;top:813px" width="13" height="14" fill="none" stroke="#555"><path d="M0.5 1.5H12.5M1.5 1.5V7.5H11.5V1.5M6.5 7.5V11.5M3.5 12.5H9.5"/></svg>
<div class="a" style="left:1027px;top:819px;width:5px;height:1.5px;background:#444"></div>
<div class="a" style="left:1035px;top:819px;width:86px;height:1px;background:#999"></div>
<div class="a" style="left:1071px;top:814px;width:5px;height:10px;background:#555"></div>
<div class="a" style="left:1078px;top:817px;width:1px;height:5px;background:#888"></div>
<svg class="a" style="left:1123px;top:816px" width="8" height="8" stroke="#444" stroke-width="1.5"><path d="M0 4H8M4 0V8"/></svg>
<div class="t" style="left:1140px;top:814px;font-size:11px;color:#555">88%</div>
<svg class="a" style="left:1173px;top:813px" width="13" height="13" fill="none" stroke="#555"><path d="M0.5 0.5H12.5V12.5H0.5Z"/><path d="M3 3L5 5M10 3L8 5M3 10L5 8M10 10L8 8" stroke-width="1.2"/></svg>
<div id="bl" class="a"></div>
<div id="br" class="a"></div>
<div id="bb" class="a"></div>
</body></html>
